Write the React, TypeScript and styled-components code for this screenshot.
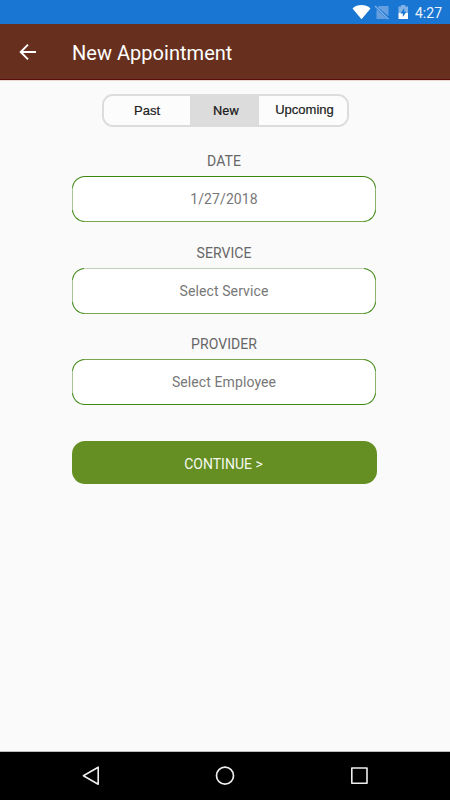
import React from "react";
import styled, { createGlobalStyle } from "styled-components";

const GlobalStyle = createGlobalStyle`
  * { box-sizing: border-box; }
  body { margin: 0; background: #fafafa; font-family: Roboto, "Liberation Sans", sans-serif; }
  button { font: inherit; padding: 0; border: 0; background: none; }
`;

const Screen = styled.div`
  width: 450px;
  height: 800px;
  display: flex;
  flex-direction: column;
  overflow: hidden;
  background: #fafafa;
`;

const StatusBar = styled.div`
  height: 24px;
  flex: none;
  display: flex;
  align-items: center;
  justify-content: flex-end;
  padding-right: 8px;
  background: #1976d2;
  color: #e9f2fb;
`;

const StatusIcons = styled.svg`
  display: block;
  margin-right: 5px;
`;

const Clock = styled.span`
  font-size: 14px;
  line-height: 24px;
  padding-top: 2px;
`;

const AppBar = styled.header`
  height: 56px;
  flex: none;
  display: flex;
  align-items: center;
  padding-left: 16px;
  background: #67301e;
  border-bottom: 1px solid #5c0c09;
  box-shadow: 0 1px 0 #ead9d6;
  color: #fff;
`;

const BackButton = styled.button`
  width: 24px;
  height: 24px;
  margin-right: 32px;
  color: inherit;
  svg { display: block; }
`;

const Title = styled.h1`
  margin: 0;
  padding-top: 2px;
  font-size: 20px;
  line-height: 24px;
  font-weight: 400;
  letter-spacing: 0.03px;
  white-space: nowrap;
`;

const Content = styled.main`
  flex: 1;
  display: flex;
  flex-direction: column;
  align-items: center;
  padding: 14px 2px 0 0;
`;

const Segments = styled.div`
  width: 247px;
  height: 33px;
  display: grid;
  grid-template-columns: 86px 69px 1fr;
  border: 2px solid #dcdcdc;
  border-radius: 11px;
  overflow: hidden;
  margin-left: 3px;
`;

const Segment = styled.button<{ $active?: boolean; $raise?: number; $shift?: number }>`
  background: ${(p) => (p.$active ? "#dcdcdc" : "#fcfcfc")};
  color: #202020;
  font-family: ${(p) => (p.$active ? 'Roboto, sans-serif' : '"Liberation Sans", sans-serif')};
  font-size: 13px;
  line-height: 15px;
  -webkit-text-stroke: 0.2px #202020;
  padding-bottom: ${(p) => p.$raise ?? 0}px;
  padding-left: ${(p) => p.$shift ?? 0}px;
`;

const Field = styled.div<{ $gap: number }>`
  display: flex;
  flex-direction: column;
  align-items: center;
  margin-top: ${(p) => p.$gap}px;
`;

const Label = styled.label`
  height: 20px;
  line-height: 20px;
  font-size: 14px;
  letter-spacing: 0.05px;
  color: #666;
  margin-bottom: 5px;
`;

const edge = { dark: "#3b850d", mid: "#76a64d", pale: "#c3d0b5" };

/* Rounded corners stay dark green while each straight edge carries its own tint. */
const Picker = styled.button<{ $top: string; $bottom: string }>`
  width: 304px;
  height: 46px;
  border: 1px solid transparent;
  border-radius: 13px;
  background:
    linear-gradient(#fff, #fff) padding-box,
    linear-gradient(${(p) => `${p.$top}, ${p.$top}`}) center top / 280px 1px no-repeat border-box,
    linear-gradient(${(p) => `${p.$bottom}, ${p.$bottom}`}) center bottom / 280px 1px no-repeat border-box,
    linear-gradient(#a9c296, #a9c296) left center / 1px 22px no-repeat border-box,
    linear-gradient(#8db36f, #8db36f) right center / 1px 22px no-repeat border-box,
    linear-gradient(#3b850d, #3b850d) border-box;
  color: #777;
  font-size: 14px;
  letter-spacing: 0.1px;
`;

const Continue = styled.button`
  width: 305px;
  height: 43px;
  margin-top: 36px;
  margin-left: 1px;
  padding: 2px 2px 0 0;
  border-radius: 13px;
  background: #658f23;
  color: #f4f8ee;
  font-size: 14px;
`;

const NavBar = styled.nav`
  height: 48px;
  flex: none;
  background: #000;
  box-shadow: 0 -1px 0 #bdbdbd;
  display: flex;
  align-items: center;
  justify-content: space-between;
  padding: 0 79px;
`;

const NavButton = styled.button`
  width: 24px;
  height: 24px;
  svg { display: block; }
`;

export default function App() {
  return (
    <>
      <GlobalStyle />
      <Screen>
        <StatusBar>
          <StatusIcons width="60" height="24" viewBox="0 0 60 24">
            <path d="M2.5 8.4C7.7 4 15.3 4 20.5 8.4L11.5 19.2Z" fill="#fff" />
            <path d="M29 6H38.5V16.2L27.8 7.2ZM26.5 9.2L37 19H26.5Z" fill="#669fe0" />
            <path d="M25 6L38.5 19.2" stroke="#82b1e7" strokeWidth="1.2" />
            <path d="M48.5 6.5H51V5H55.3V6.5H58V13H48.5Z" fill="#83b2e6" />
            <path d="M48.5 13H58V19H48.5Z" fill="#fff" />
            <path d="M54.3 8L50.5 13.4H52.8V17L56.3 11.8H54.2Z" fill="#1976d2" />
          </StatusIcons>
          <Clock>4:27</Clock>
        </StatusBar>
        <AppBar>
          <BackButton aria-label="Back">
            <svg width="24" height="24" viewBox="0 0 24 24" fill="none" stroke="currentColor" strokeWidth="1.9">
              <path d="M20 12H5M12 4.7L4.7 12L12 19.3" />
            </svg>
          </BackButton>
          <Title>New Appointment</Title>
        </AppBar>
        <Content>
          <Segments>
            <Segment>Past</Segment>
            <Segment $active $shift={3}>New</Segment>
            <Segment $raise={2} $shift={3}>Upcoming</Segment>
          </Segments>
          <Field $gap={24}>
            <Label>DATE</Label>
            <Picker $top={edge.dark} $bottom={edge.mid}>1/27/2018</Picker>
          </Field>
          <Field $gap={21}>
            <Label>SERVICE</Label>
            <Picker $top={edge.pale} $bottom={edge.mid}>Select Service</Picker>
          </Field>
          <Field $gap={20}>
            <Label>PROVIDER</Label>
            <Picker $top={edge.mid} $bottom={edge.dark}>Select Employee</Picker>
          </Field>
          <Continue>CONTINUE &gt;</Continue>
        </Content>
        <NavBar>
          <NavButton aria-label="Back">
            <svg width="24" height="24" viewBox="0 0 24 24" fill="none" stroke="#eee" strokeWidth="1.6" strokeLinejoin="round">
              <path d="M19.2 3.2V20.2L4.4 11.7Z" />
            </svg>
          </NavButton>
          <NavButton aria-label="Home">
            <svg width="24" height="24" viewBox="0 0 24 24" fill="none" stroke="#eee" strokeWidth="1.7">
              <circle cx="12" cy="11.7" r="8.5" />
            </svg>
          </NavButton>
          <NavButton aria-label="Recent apps">
            <svg width="24" height="24" viewBox="0 0 24 24" fill="none" stroke="#eee" strokeWidth="1.6" strokeLinejoin="round">
              <rect x="4.8" y="4" width="15.2" height="15.3" />
            </svg>
          </NavButton>
        </NavBar>
      </Screen>
    </>
  );
}
